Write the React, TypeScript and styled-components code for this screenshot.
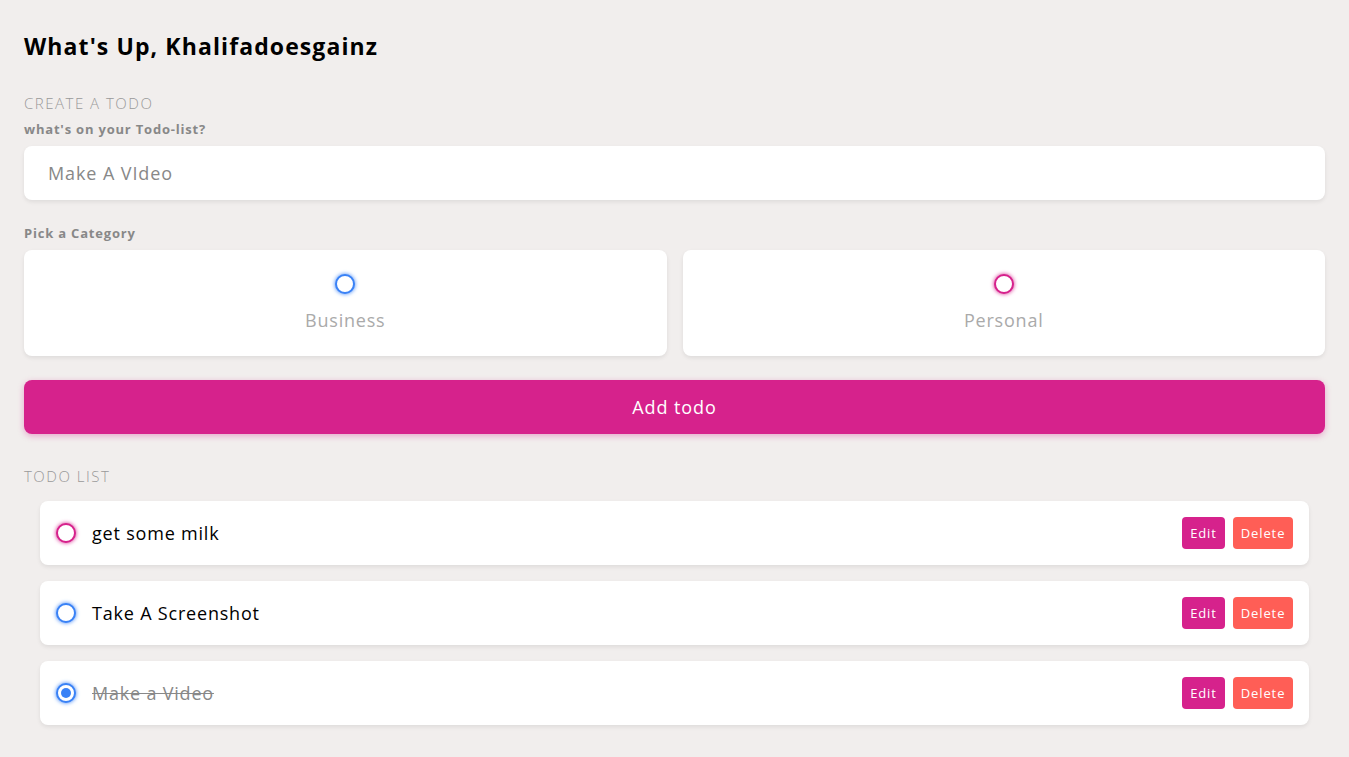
import React from "react";
import styled, { createGlobalStyle } from "styled-components";

const Global = createGlobalStyle`
  * { box-sizing: border-box; }
  html, body { margin: 0; padding: 0; background: #f1eeed; }
  body { font-family: "Open Sans", "DejaVu Sans", sans-serif; color: #000; letter-spacing: 0.05em; }
`;

const PINK = "#d6228c";
const BLUE = "#3a82f6";
const RED = "#ff5e56";

const Page = styled.main`
  padding: 32px 24px 24px;
`;

const Title = styled.h1`
  margin: 0 0 34px;
  font-size: 23px;
  font-weight: 700;
  line-height: 28px;
  letter-spacing: 1.1px;
`;

const SectionLabel = styled.h3`
  margin: 0 0 8px;
  font-size: 15px;
  font-weight: 300;
  color: #999;
  text-transform: uppercase;
  line-height: 18px;
  letter-spacing: 1.5px;
`;

const FieldLabel = styled.h4`
  margin: 0 0 8px;
  font-size: 13px;
  font-weight: 700;
  color: #888;
  line-height: 18px;
`;

const TextInput = styled.input`
  display: block;
  width: 100%;
  height: 54px;
  border: none;
  border-radius: 8px;
  background: #fff;
  box-shadow: 0 2px 4px rgba(0, 0, 0, 0.08);
  padding: 0 24px;
  font-family: inherit;
  font-size: 18px;
  letter-spacing: 0.05em;
  color: #888;
  margin-bottom: 24px;
  outline: none;
`;

const Options = styled.div`
  display: grid;
  grid-template-columns: 1fr 1fr;
  gap: 16px;
  margin-bottom: 24px;
`;

const OptionCard = styled.label`
  height: 106px;
  background: #fff;
  border-radius: 8px;
  box-shadow: 0 2px 4px rgba(0, 0, 0, 0.08);
  display: flex;
  flex-direction: column;
  align-items: center;
  padding-top: 24px;
  gap: 14px;
  font-size: 18px;
  color: #aaa;
`;

const Bubble = styled.span<{ $color: string; $checked?: boolean }>`
  display: block;
  width: 20px;
  height: 20px;
  border-radius: 50%;
  border: 2px solid ${(p) => p.$color};
  box-shadow: 0 0 4px ${(p) => p.$color};
  background: #fff;
  position: relative;
  flex: none;
  ${(p) =>
    p.$checked &&
    `&::after { content: ""; position: absolute; left: 3px; top: 3px; width: 10px; height: 10px; border-radius: 50%; background: ${p.$color}; }`}
`;

const AddButton = styled.button`
  display: block;
  width: 100%;
  height: 54px;
  border: none;
  border-radius: 8px;
  background: ${PINK};
  color: #fff;
  font-family: inherit;
  font-size: 18px;
  letter-spacing: 0.05em;
  box-shadow: 0 2px 6px rgba(214, 34, 140, 0.35);
  margin-bottom: 33px;
`;

const List = styled.div`
  display: flex;
  flex-direction: column;
  gap: 16px;
  margin: 16px 16px 0;
`;

const Item = styled.div`
  height: 64px;
  background: #fff;
  border-radius: 8px;
  box-shadow: 0 2px 4px rgba(0, 0, 0, 0.08);
  display: flex;
  align-items: center;
  padding: 0 16px;
  gap: 16px;
`;

const ItemText = styled.span<{ $done?: boolean }>`
  flex: 1;
  font-size: 18px;
  color: ${(p) => (p.$done ? "#888" : "#000")};
  text-decoration: ${(p) => (p.$done ? "line-through" : "none")};
`;

const Actions = styled.div`
  display: flex;
  gap: 8px;
`;

const SmallButton = styled.button<{ $bg: string; $w: number }>`
  height: 32px;
  width: ${(p) => p.$w}px;
  border: none;
  border-radius: 4px;
  background: ${(p) => p.$bg};
  color: #fff;
  font-family: inherit;
  font-size: 13px;
  letter-spacing: 0.07em;
  padding: 0;
`;

const todos = [
  { text: "get some milk", color: PINK, done: false },
  { text: "Take A Screenshot", color: BLUE, done: false },
  { text: "Make a Video", color: BLUE, done: true },
];

export default function App() {
  return (
    <>
      <Global />
      <Page>
        <Title>What's Up, Khalifadoesgainz</Title>
        <SectionLabel>Create a todo</SectionLabel>
        <FieldLabel>what's on your Todo-list?</FieldLabel>
        <TextInput defaultValue="Make A VIdeo" />
        <FieldLabel>Pick a Category</FieldLabel>
        <Options>
          <OptionCard>
            <Bubble $color={BLUE} />
            Business
          </OptionCard>
          <OptionCard>
            <Bubble $color={PINK} />
            Personal
          </OptionCard>
        </Options>
        <AddButton>Add todo</AddButton>
        <SectionLabel>Todo list</SectionLabel>
        <List>
          {todos.map((t) => (
            <Item key={t.text}>
              <Bubble $color={t.color} $checked={t.done} />
              <ItemText $done={t.done}>{t.text}</ItemText>
              <Actions>
                <SmallButton $bg={PINK} $w={43}>Edit</SmallButton>
                <SmallButton $bg={RED} $w={60}>Delete</SmallButton>
              </Actions>
            </Item>
          ))}
        </List>
      </Page>
    </>
  );
}
